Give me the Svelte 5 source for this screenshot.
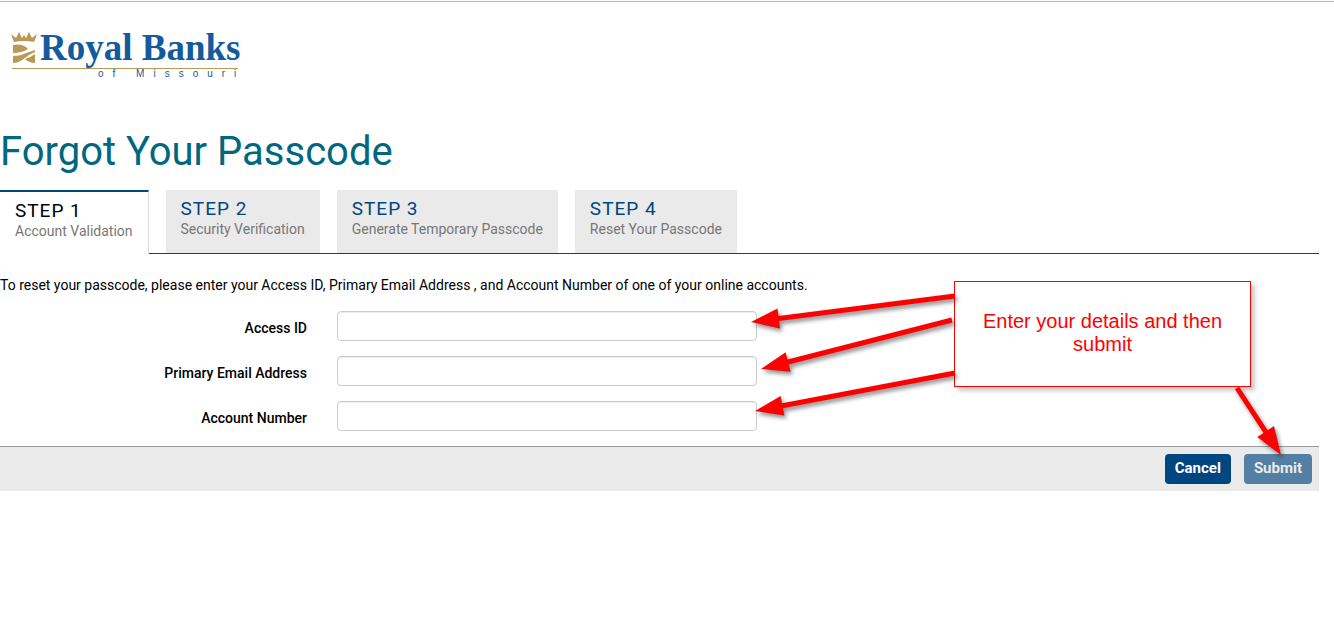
<script lang="ts">
  const steps = [
    { title: "STEP 1", label: "Account Validation" },
    { title: "STEP 2", label: "Security Verification" },
    { title: "STEP 3", label: "Generate Temporary Passcode" },
    { title: "STEP 4", label: "Reset Your Passcode" },
  ];

  const fields = [
    { id: "access-id", label: "Access ID", type: "text" },
    { id: "email", label: "Primary Email Address", type: "email" },
    { id: "account-number", label: "Account Number", type: "text" },
  ];

  // tail and tip of each arrow
  const arrows = [
    { x1: 955, y1: 296, x2: 751, y2: 322 },
    { x1: 952, y1: 320, x2: 761, y2: 369 },
    { x1: 955, y1: 373, x2: 755, y2: 411 },
    { x1: 1237, y1: 388, x2: 1281, y2: 455 },
  ];

  let current = $state(0);
  let values = $state(["", "", ""]);

  function angle(a: { x1: number; y1: number; x2: number; y2: number }) {
    return (Math.atan2(a.y2 - a.y1, a.x2 - a.x1) * 180) / Math.PI;
  }

  function length(a: { x1: number; y1: number; x2: number; y2: number }) {
    return Math.hypot(a.x2 - a.x1, a.y2 - a.y1);
  }

  function clear() {
    values = ["", "", ""];
  }
</script>

<div class="page">
  <header>
    <div class="logo">
      <svg class="crown" width="28" height="32" viewBox="0 0 28 32" aria-hidden="true">
        <path
          d="M4 10 L1 2 L6 6 L9 0 L12 6 L14 3 L16 6 L19 0 L22 6 L27 2 L24 10 Q14 8 4 10Z"
        />
        <path d="M3 13 Q13 11 18 17 Q12 21 3 21Z" />
        <path d="M3 24 Q11 24 16 21 L25 18 V20 Q20 22 15 26 Q9 31 3 31Z" />
        <path d="M25 22 V31 Q19 31 15 27 Q20 26 25 22Z" />
      </svg>
      <span class="name">Royal Banks</span>
      <span class="place">of Missouri</span>
    </div>
  </header>

  <main>
    <h1>Forgot Your Passcode</h1>

    <ol class="steps">
      {#each steps as step, i}
        <li class="step" class:active={i === current}>
          <span class="step-title">{step.title}</span>
          <span class="step-label">{step.label}</span>
        </li>
      {/each}
    </ol>

    <form onsubmit={(e) => e.preventDefault()}>
      <p class="intro">
        To reset your passcode, please enter your Access ID, Primary Email Address , and Account Number of one of your
        online accounts.
      </p>
      {#each fields as field, i}
        <div class="field">
          <label for={field.id}>{field.label}</label>
          <input id={field.id} type={field.type} bind:value={values[i]} />
        </div>
      {/each}
      <div class="actions">
        <button type="button" onclick={clear}>Cancel</button>
        <button type="submit" disabled={values.some((v) => !v)}>Submit</button>
      </div>
    </form>
  </main>

  <div class="callout">Enter your details and then submit</div>
  <svg class="arrows" width="1334" height="500" aria-hidden="true">
    {#each arrows as arrow}
      <g transform="translate({arrow.x1} {arrow.y1}) rotate({angle(arrow)})">
        <path d="M0 -2.5 H{length(arrow) - 28} V-10 L{length(arrow)} 0 L{length(arrow) - 28} 10 V2.5 H0Z" />
      </g>
    {/each}
  </svg>
</div>

<style>
  :global(body) {
    margin: 0;
    background: #fff;
  }
  .page {
    position: relative;
    padding-top: 29px;
    border-top: 1px solid #b4b4b4;
    margin-top: 1px;
    font-family: Roboto, "Liberation Sans", sans-serif;
    font-size: 14px;
    color: #000;
  }
  header {
    display: flex;
    height: 99px;
    padding-left: 10px;
  }
  .logo {
    display: grid;
    grid-template-columns: 30px auto;
    grid-template-rows: 37px 12px;
    align-self: flex-start;
    color: #145a9c;
  }
  .crown {
    margin-top: 1px;
    fill: #b89a56;
  }
  .name {
    font: bold 37px/34px "Liberation Serif", serif;
    white-space: nowrap;
  }
  .place {
    grid-column: 1 / -1;
    margin-left: 2px;
    padding-left: 86px;
    border-top: 1px solid #b89a56;
    font: 10px/10px "Liberation Sans", sans-serif;
    letter-spacing: 9px;
    white-space: nowrap;
    width: 140px;
  }
  main {
    margin-right: 15px;
  }
  h1 {
    margin: 0;
    padding-bottom: 16px;
    font-size: 40px;
    line-height: 44px;
    font-weight: 400;
    color: #00677f;
  }
  .steps {
    display: flex;
    gap: 17px;
    margin: 0;
    padding: 0;
    list-style: none;
    border-bottom: 1px solid #00467f;
  }
  .step {
    display: flex;
    flex-direction: column;
    padding: 9px 15px 14px;
    background: #eaeaea;
    color: #00467f;
  }
  .step.active {
    padding-bottom: 13px;
    margin-bottom: -1px;
    border-top: 2px solid #00467f;
    border-right: 1px solid #ddd;
    background: #fff;
    color: #000;
  }
  .step-title {
    font-size: 19px;
    line-height: 20px;
    letter-spacing: 1px;
  }
  .step-label {
    line-height: 20px;
    color: #777;
  }
  .intro {
    margin: 0;
    padding: 21px 0 16px;
    line-height: 20px;
  }
  .field {
    display: flex;
    gap: 30px;
    margin-bottom: 15px;
  }
  .field label {
    width: 307px;
    padding-top: 7px;
    line-height: 20px;
    text-align: right;
    font-weight: 500;
  }
  .field input {
    box-sizing: border-box;
    width: 420px;
    height: 30px;
    padding: 4px 8px;
    border: 1px solid #ccc;
    border-radius: 4px;
    box-shadow: inset 0 1px 1px rgba(0, 0, 0, 0.075);
    font: inherit;
  }
  .actions {
    display: flex;
    justify-content: flex-end;
    gap: 13px;
    padding: 7px;
    border-top: 1px solid #999;
    background: #eaeaea;
  }
  button {
    height: 30px;
    padding: 0 10px 2px;
    border: 0;
    border-radius: 4px;
    background: #00467f;
    color: #fff;
    font: bold 15px/20px Roboto, sans-serif;
  }
  button:disabled {
    background: #527fa3;
    color: #eaeaea;
  }
  .callout {
    position: absolute;
    left: 954px;
    top: 279px;
    box-sizing: border-box;
    width: 297px;
    padding: 28px 20px 30px;
    border: 1px solid #f00;
    background: #fff;
    box-shadow: 4px 4px 4px rgba(0, 0, 0, 0.2);
    color: #f00;
    font: 20px/23px "Liberation Sans", sans-serif;
    text-align: center;
  }
  .arrows {
    position: absolute;
    left: 0;
    top: -2px;
    max-width: 100%;
    fill: #f00;
    filter: drop-shadow(2px 3px 2px rgba(0, 0, 0, 0.45));
    pointer-events: none;
  }
</style>
